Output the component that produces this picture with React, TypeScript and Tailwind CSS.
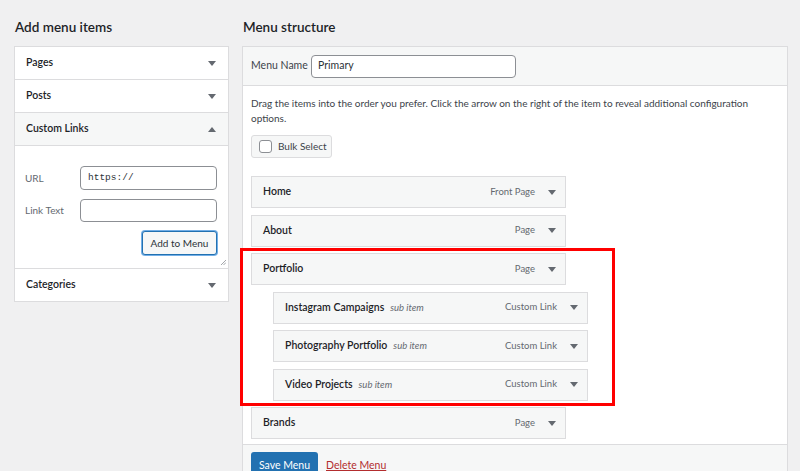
const font = { fontFamily: 'Lato, "Noto Sans", sans-serif' };

const Caret = ({ up = false }: { up?: boolean }) => (
  <svg width="8" height="5" viewBox="0 0 8 5" className="shrink-0">
    <path d={up ? "M0 5 L4 0 L8 5 Z" : "M0 0 L8 0 L4 5 Z"} fill="#646970" />
  </svg>
);

const AccordionRow = ({ title, open = false }: { title: string; open?: boolean }) => (
  <div
    className={`h-[33px] flex items-center justify-between pl-[11px] pr-[12px] border-b border-[#dcdcde] ${
      open ? "bg-[#f6f7f7]" : "bg-white"
    }`}
  >
    <span className="text-[10.5px] font-semibold text-[#1d2327]">{title}</span>
    <Caret up={open} />
  </div>
);

type Item = { title: string; type: string; sub?: boolean };

const items: Item[] = [
  { title: "Home", type: "Front Page" },
  { title: "About", type: "Page" },
  { title: "Portfolio", type: "Page" },
  { title: "Instagram Campaigns", type: "Custom Link", sub: true },
  { title: "Photography Portfolio", type: "Custom Link", sub: true },
  { title: "Video Projects", type: "Custom Link", sub: true },
  { title: "Brands", type: "Page" },
];

const MenuItem = ({ item }: { item: Item }) => (
  <div
    className={`h-[32px] w-[315px] flex items-center justify-between pl-[11px] pr-[9px] bg-[#f6f7f7] border border-[#dcdcde] ${
      item.sub ? "ml-[22px]" : ""
    }`}
  >
    <div className="flex items-baseline gap-[6px] whitespace-nowrap">
      <span className="text-[10.5px] font-semibold text-[#1d2327]">{item.title}</span>
      {item.sub && <span className="text-[9.5px] italic text-[#646970]">sub item</span>}
    </div>
    <div className="flex items-center gap-[13px] whitespace-nowrap">
      <span className="text-[9.5px] text-[#646970]">{item.type}</span>
      <Caret />
    </div>
  </div>
);

export default function App() {
  return (
    <div className="relative w-[800px] h-[471px] overflow-hidden bg-[#f0f0f1] flex" style={font}>
      {/* left column */}
      <div className="ml-[14px] w-[215px] pt-[17px]">
        <h2 className="text-[13.5px] leading-[20px] font-semibold text-[#1d2327] pl-[1px] mb-[9px]">Add menu items</h2>
        <div className="border border-[#dcdcde] border-b-0 bg-white">
          <AccordionRow title="Pages" />
          <AccordionRow title="Posts" />
          <AccordionRow title="Custom Links" open />
          <div className="relative h-[123px] border-b border-[#dcdcde] pl-[10px] pr-[11px] pt-[20px]">
            <div className="flex items-center h-[24px]">
              <span className="w-[55px] text-[10px] text-[#646970]">URL</span>
              <div
                className="flex-1 h-[24px] border border-[#8c8f94] rounded-[4px] flex items-center px-[7px] text-[9.5px] text-[#2c3338]"
                style={{ fontFamily: '"Liberation Mono", monospace' }}
              >
                https://
              </div>
            </div>
            <div className="flex items-center h-[23px] mt-[9px]">
              <span className="w-[55px] text-[10px] text-[#646970] whitespace-nowrap">Link Text</span>
              <div className="flex-1 h-[23px] border border-[#8c8f94] rounded-[4px] bg-white" />
            </div>
            <div className="flex justify-end mt-[9px]">
              <div className="w-[75px] h-[24px] flex items-center justify-center border border-[#2271b1] rounded-[3px] bg-[#f6f7f7] text-[10px] text-[#2c3338] shadow-[0_0_0_1px_#72aee6] whitespace-nowrap">
                Add to Menu
              </div>
            </div>
            <svg width="5" height="5" viewBox="0 0 5 5" className="absolute right-[2px] bottom-[3px]">
              <path d="M0 5 L5 0 M2.5 5 L5 2.5" stroke="#8c8f94" strokeWidth="0.8" />
            </svg>
          </div>
          <AccordionRow title="Categories" />
        </div>
      </div>

      {/* right column */}
      <div className="ml-[13px] w-[546px] pt-[17px]">
        <h2 className="text-[13.5px] leading-[20px] font-semibold text-[#1d2327] pl-[1px] mb-[9px]">Menu structure</h2>
        <div className="border border-[#dcdcde] bg-white">
          <div className="h-[39px] bg-[#f6f7f7] border-b border-[#dcdcde] flex items-center pl-[8px]">
            <span className="w-[60px] text-[10.5px] text-[#3c434a] whitespace-nowrap">Menu Name</span>
            <div className="w-[205px] h-[23px] border border-[#8c8f94] rounded-[4px] bg-white flex items-center px-[6px] text-[10.5px] text-[#2c3338]">
              Primary
            </div>
          </div>
          <div className="pl-[8px] pr-[20px] pt-[10px]">
            <p className="text-[10px] leading-[15px] text-[#3c434a]">
              Drag the items into the order you prefer. Click the arrow on the right of the item to reveal additional configuration options.
            </p>
            <div className="mt-[9px] w-[81px] h-[23px] flex items-center gap-[6px] pl-[7px] border border-[#dcdcde] rounded-[3px] bg-[#f6f7f7] whitespace-nowrap">
              <span className="w-[13px] h-[13px] border border-[#8c8f94] rounded-[3px] bg-white shrink-0" />
              <span className="text-[10px] text-[#3c434a]">Bulk Select</span>
            </div>
            <div className="mt-[18px] flex flex-col gap-[6.5px] pb-[5px]">
              {items.map((it) => (
                <MenuItem key={it.title} item={it} />
              ))}
            </div>
          </div>
          <div className="border-t border-[#dcdcde] bg-[#f6f7f7] h-[60px] pl-[8px] pt-[7px] flex items-start gap-[8px]">
            <div className="w-[67px] h-[28px] flex items-center justify-center rounded-[3px] bg-[#2271b1] text-white text-[10.5px] whitespace-nowrap">
              Save Menu
            </div>
            <span className="mt-[6px] text-[10.5px] leading-[14px] text-[#b32d2e] underline">Delete Menu</span>
          </div>
        </div>
      </div>

      {/* highlight */}
      <div className="absolute left-[240px] top-[248px] w-[375px] h-[158px] border-[3px] border-[#ff0000]" />
    </div>
  );
}
